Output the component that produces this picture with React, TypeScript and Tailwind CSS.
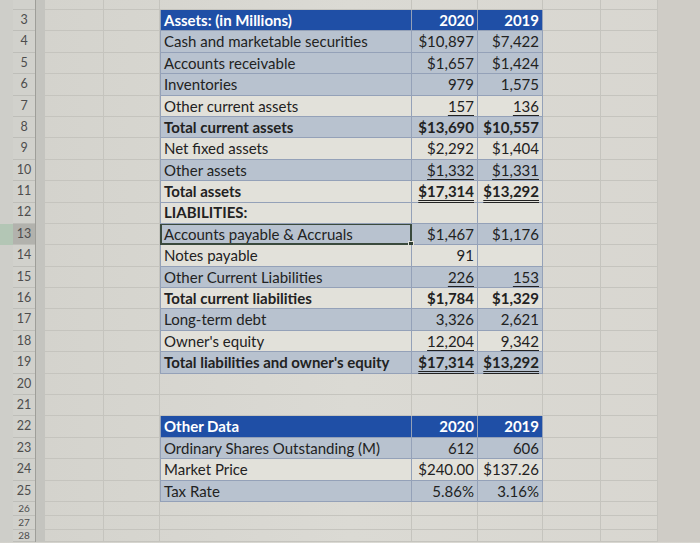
import React from 'react';

type Kind = 'head' | 'blue' | 'cream';
type Line = 'single' | 'double' | undefined;

interface TableRow {
  label: string;
  a?: string;
  b?: string;
  kind: Kind;
  bold?: boolean;
  line?: Line;
  selected?: boolean;
}

// sheet rows 3..25 that hold the two tables
const tableRows: Record<number, TableRow> = {
  3: { label: 'Assets: (in Millions)', a: '2020', b: '2019', kind: 'head' },
  4: { label: 'Cash and marketable securities', a: '$10,897', b: '$7,422', kind: 'blue' },
  5: { label: 'Accounts receivable', a: '$1,657', b: '$1,424', kind: 'blue' },
  6: { label: 'Inventories', a: '979', b: '1,575', kind: 'blue' },
  7: { label: 'Other current assets', a: '157', b: '136', kind: 'cream', line: 'single' },
  8: { label: 'Total current assets', a: '$13,690', b: '$10,557', kind: 'blue', bold: true },
  9: { label: 'Net fixed assets', a: '$2,292', b: '$1,404', kind: 'cream' },
  10: { label: 'Other assets', a: '$1,332', b: '$1,331', kind: 'blue', line: 'single' },
  11: { label: 'Total assets', a: '$17,314', b: '$13,292', kind: 'cream', bold: true, line: 'double' },
  12: { label: 'LIABILITIES:', kind: 'cream', bold: true },
  13: { label: 'Accounts payable & Accruals', a: '$1,467', b: '$1,176', kind: 'blue', selected: true },
  14: { label: 'Notes payable', a: '91', kind: 'cream' },
  15: { label: 'Other Current Liabilities', a: '226', b: '153', kind: 'blue', line: 'single' },
  16: { label: 'Total current liabilities', a: '$1,784', b: '$1,329', kind: 'cream', bold: true },
  17: { label: 'Long-term debt', a: '3,326', b: '2,621', kind: 'blue' },
  18: { label: "Owner's equity", a: '12,204', b: '9,342', kind: 'cream', line: 'single' },
  19: { label: "Total liabilities and owner's equity", a: '$17,314', b: '$13,292', kind: 'blue', bold: true, line: 'double' },
  22: { label: 'Other Data', a: '2020', b: '2019', kind: 'head' },
  23: { label: 'Ordinary Shares Outstanding (M)', a: '612', b: '606', kind: 'blue' },
  24: { label: 'Market Price', a: '$240.00', b: '$137.26', kind: 'cream' },
  25: { label: 'Tax Rate', a: '5.86%', b: '3.16%', kind: 'blue' },
};

const bgFor: Record<Kind, string> = {
  head: 'bg-[#1f4fa6] text-white font-bold',
  blue: 'bg-[#b8c2cf] text-[#222222]',
  cream: 'bg-[#e2e1da] text-[#222222]',
};

const Value: React.FC<{ text?: string; line: Line }> = ({ text, line }) => {
  if (!text) return null;
  if (line === 'single') return <span className="underline decoration-1 underline-offset-[3px]">{text}</span>;
  if (line === 'double') return <span className="underline decoration-double decoration-1 underline-offset-[3px]">{text}</span>;
  return <span>{text}</span>;
};

const EmptyCell: React.FC<{ w: string }> = ({ w }) => (
  <div className={`${w} shrink-0 h-full border-r border-b border-[#c5c4be]`} />
);

const SheetRow: React.FC<{ n: number; h: string; small?: boolean }> = ({ n, h, small }) => {
  const row = tableRows[n];
  const selected = row?.selected;
  return (
    <div className={`flex ${h} overflow-hidden`}>
      {/* left edge + row header */}
      <div className={`w-[13px] shrink-0 h-full ${selected ? 'bg-[#b3c6b5]' : 'bg-[#cecec9]'}`} />
      <div
        className={`w-[22px] shrink-0 h-full flex items-center justify-center border-b border-[#bebeb9] leading-none text-[#4d4d4d] ${
          small ? 'text-[10px]' : 'text-[12.5px]'
        } ${selected ? 'bg-[#b2b2ad]' : 'bg-[#d1d1cc]'}`}
      >
        {n > 2 ? n : ''}
      </div>
      <div className="w-[10px] shrink-0 h-full bg-[#c4c4bf] border-l border-[#9e9e99]" />
      <EmptyCell w="w-[59px]" />
      <EmptyCell w="w-[56px]" />

      {row ? (
        <>
          <div
            className={`relative w-[252px] shrink-0 h-full flex items-center pl-[3px] border-l border-b border-r border-[#94a1b8] ${bgFor[row.kind]} ${
              row.bold ? 'font-bold' : ''
            }`}
          >
            <span className="whitespace-nowrap">{row.label}</span>
            {selected && (
              <>
                <div className="absolute -inset-[1px] border-2 border-[#3a4a3d]" />
                <div className="absolute -bottom-[3px] -right-[3px] w-[6px] h-[6px] bg-[#2f3e32] border border-[#e2e1da]" />
              </>
            )}
          </div>
          <div
            className={`w-[66px] shrink-0 h-full flex items-center justify-end pr-[3px] border-b border-r border-[#94a1b8] ${bgFor[row.kind]} ${
              row.bold ? 'font-bold' : ''
            }`}
          >
            <Value text={row.a} line={row.line} />
          </div>
          <div
            className={`w-[65px] shrink-0 h-full flex items-center justify-end pr-[3px] border-b border-r border-[#94a1b8] ${bgFor[row.kind]} ${
              row.bold ? 'font-bold' : ''
            }`}
          >
            <Value text={row.b} line={row.line} />
          </div>
        </>
      ) : (
        <>
          <EmptyCell w="w-[252px]" />
          <EmptyCell w="w-[66px]" />
          <EmptyCell w="w-[65px]" />
        </>
      )}

      <EmptyCell w="w-[58px]" />
      <EmptyCell w="w-[57px]" />
      <div className="flex-1 h-full bg-[#cfccc6]" />
    </div>
  );
};

export default function App() {
  const rows: { n: number; h: string; small?: boolean }[] = [{ n: 2, h: 'h-[10px]' }];
  for (let n = 3; n <= 25; n++) rows.push({ n, h: 'h-[21.4px]' });
  rows.push({ n: 26, h: 'h-[14px]', small: true }, { n: 27, h: 'h-[14px]', small: true }, { n: 28, h: 'h-[12px]', small: true });

  return (
    <div className="w-[700px] h-[543px] overflow-hidden bg-linear-to-r from-[#d3d2cc] via-[#dbdad4] to-[#d8d6d0] font-['Lato','Liberation_Sans',sans-serif] text-[15px]">
      {rows.map((r) => (
        <SheetRow key={r.n} n={r.n} h={r.h} small={r.small} />
      ))}
    </div>
  );
}
